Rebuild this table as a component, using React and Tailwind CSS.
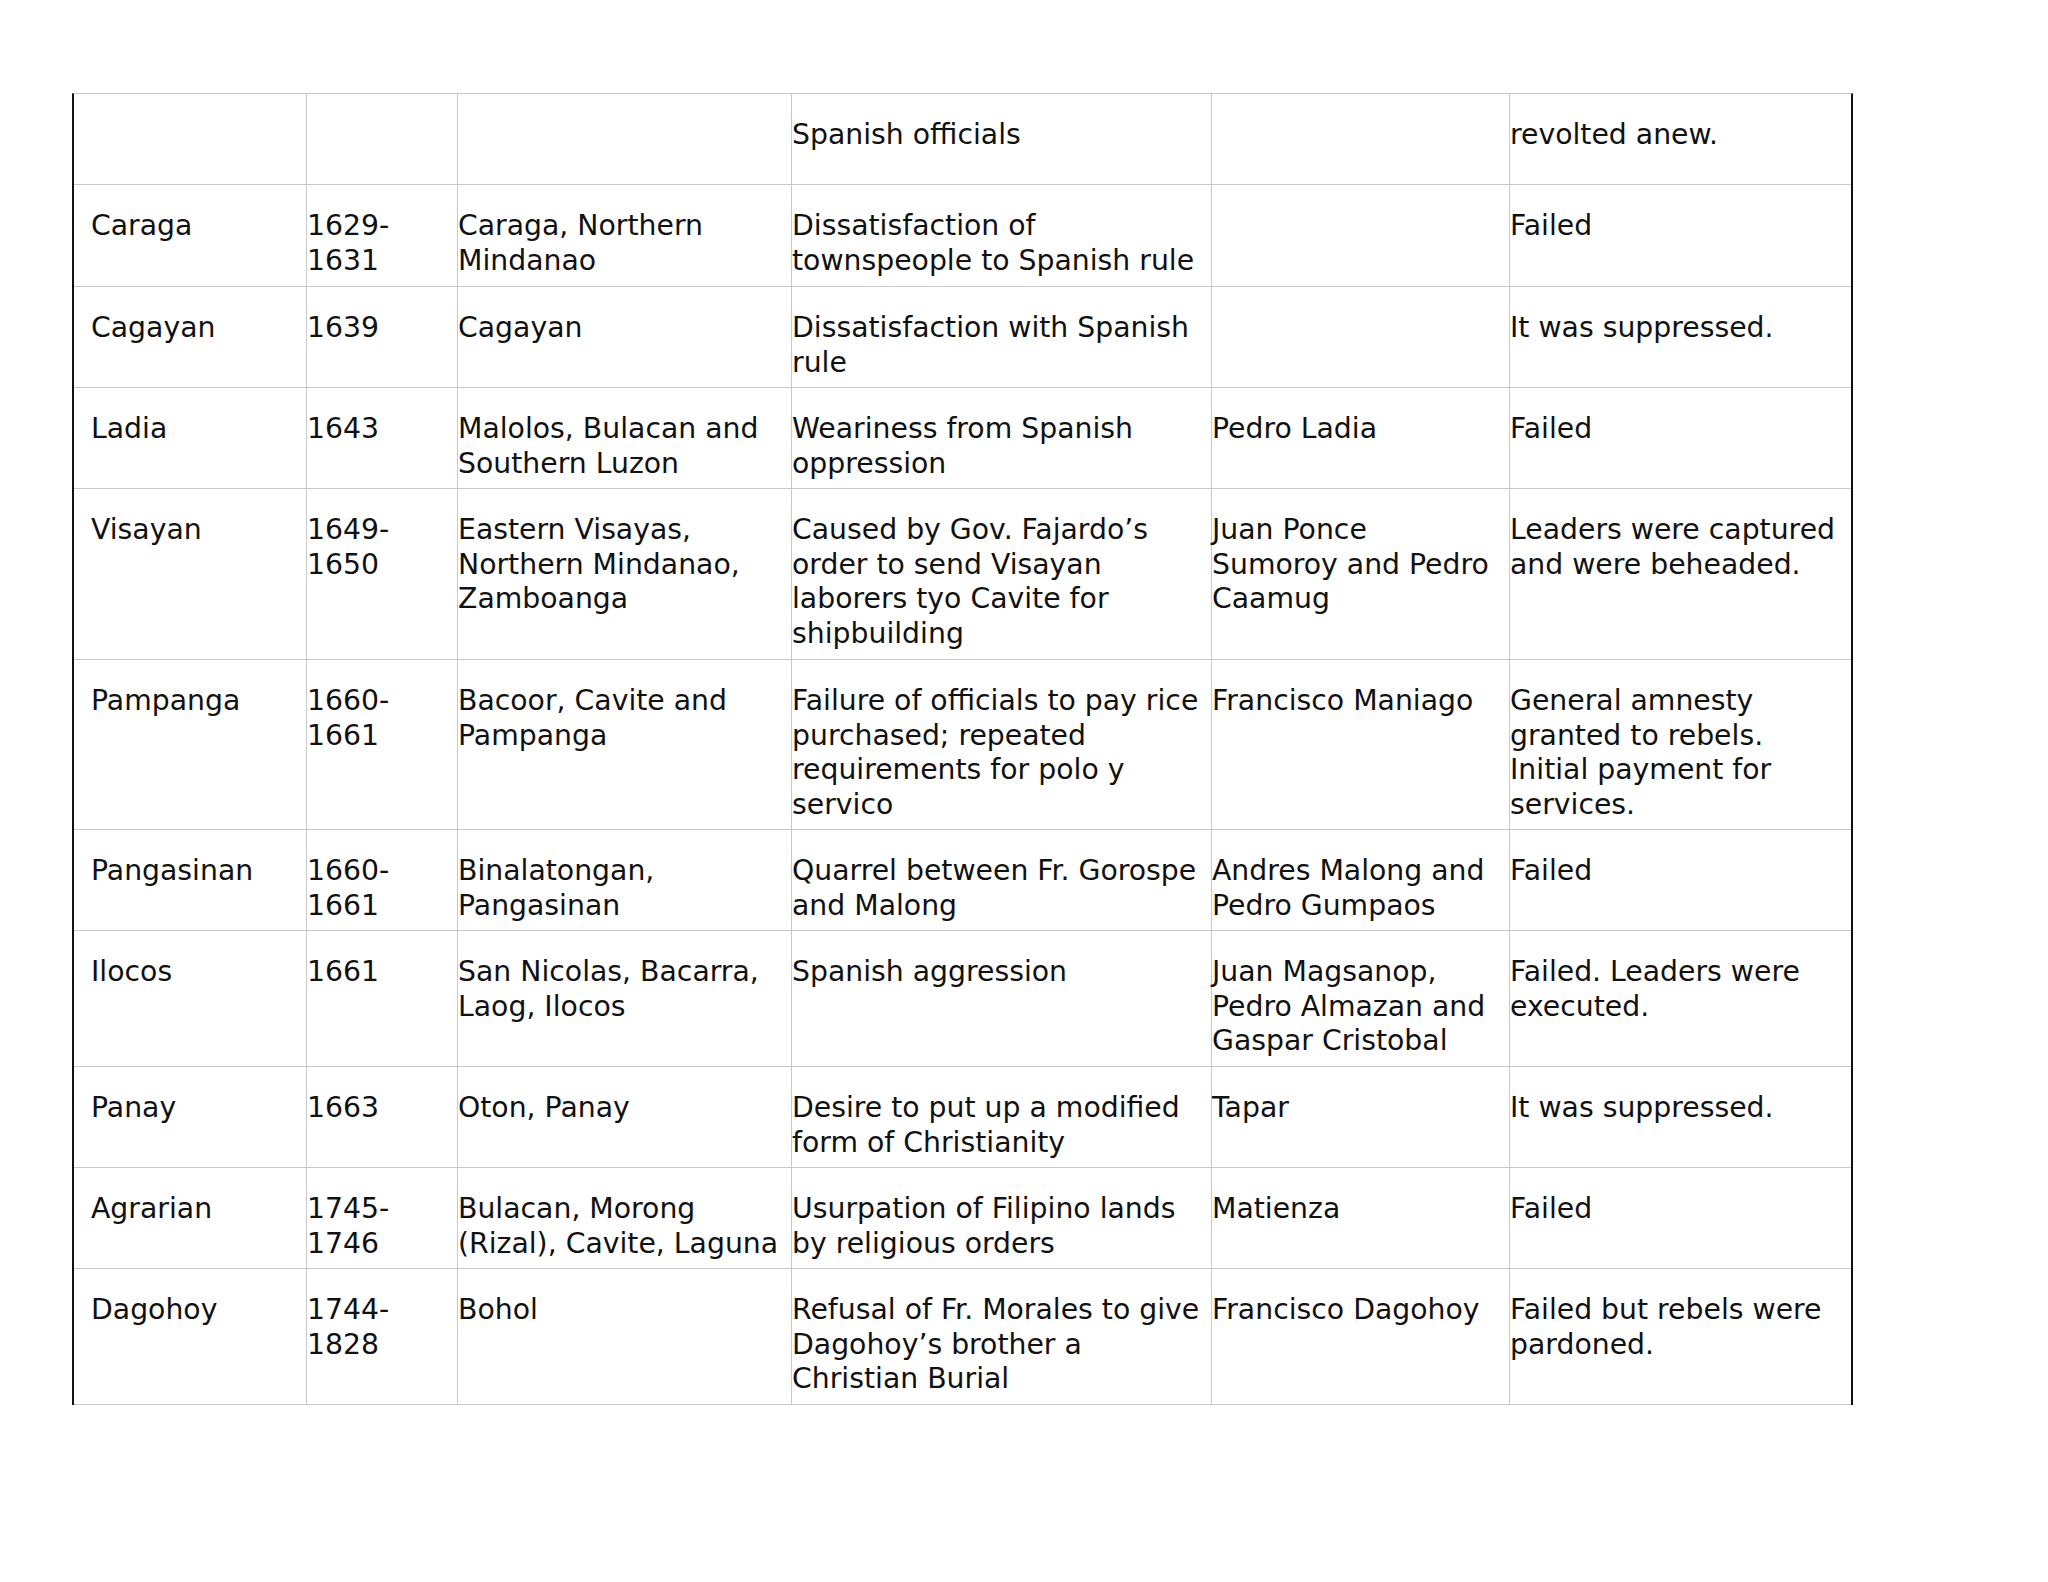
import React from "react";

const rows = [
  ["", "", "", "Spanish officials", "", "revolted anew."],
  ["Caraga", "1629-\n1631", "Caraga, Northern\nMindanao", "Dissatisfaction of\ntownspeople to Spanish rule", "", "Failed"],
  ["Cagayan", "1639", "Cagayan", "Dissatisfaction with Spanish\nrule", "", "It was suppressed."],
  ["Ladia", "1643", "Malolos, Bulacan and\nSouthern Luzon", "Weariness from Spanish\noppression", "Pedro Ladia", "Failed"],
  ["Visayan", "1649-\n1650", "Eastern Visayas,\nNorthern Mindanao,\nZamboanga", "Caused by Gov. Fajardo’s\norder to send Visayan\nlaborers tyo Cavite for\nshipbuilding", "Juan Ponce\nSumoroy and Pedro\nCaamug", "Leaders were captured\nand were beheaded."],
  ["Pampanga", "1660-\n1661", "Bacoor, Cavite and\nPampanga", "Failure of officials to pay rice\npurchased; repeated\nrequirements for polo y\nservico", "Francisco Maniago", "General amnesty\ngranted to rebels.\nInitial payment for\nservices."],
  ["Pangasinan", "1660-\n1661", "Binalatongan,\nPangasinan", "Quarrel between Fr. Gorospe\nand Malong", "Andres Malong and\nPedro Gumpaos", "Failed"],
  ["Ilocos", "1661", "San Nicolas, Bacarra,\nLaog, Ilocos", "Spanish aggression", "Juan Magsanop,\nPedro Almazan and\nGaspar Cristobal", "Failed. Leaders were\nexecuted."],
  ["Panay", "1663", "Oton, Panay", "Desire to put up a modified\nform of Christianity", "Tapar", "It was suppressed."],
  ["Agrarian", "1745-\n1746", "Bulacan, Morong\n(Rizal), Cavite, Laguna", "Usurpation of Filipino lands\nby religious orders", "Matienza", "Failed"],
  ["Dagohoy", "1744-\n1828", "Bohol", "Refusal of Fr. Morales to give\nDagohoy’s brother a\nChristian Burial", "Francisco Dagohoy", "Failed but rebels were\npardoned."],
];

export default function App() {
  return (
    <div className="min-h-[1582px] w-[2048px] bg-white pt-[93px] pl-[72px]">
      <div
        className="w-[1781px] border-l-2 border-r-2 border-t border-l-[#111] border-r-[#111] border-t-[#c9c9c9] text-[28.3px] leading-[34.7px] text-[#111]"
        style={{ fontFamily: '"DejaVu Sans", Verdana, sans-serif' }}
      >
        <div className="grid grid-cols-[233px_151px_334px_420px_298px_341px] grid-rows-[91px_102px_101px_101px_171px_170px_101px_136px_101px_101px_136px]">
          {rows.map((r, i) =>
            r.map((c, j) => (
              <div
                key={i + "-" + j}
                className={
                  "whitespace-pre overflow-visible border-b border-[#c9c9c9] pt-[24px] " +
                  (j === 0 ? "pl-[17px] " : "pl-0 ") +
                  (j < 5 ? "border-r" : "")
                }
              >
                {c}
              </div>
            ))
          )}
        </div>
      </div>
    </div>
  );
}
